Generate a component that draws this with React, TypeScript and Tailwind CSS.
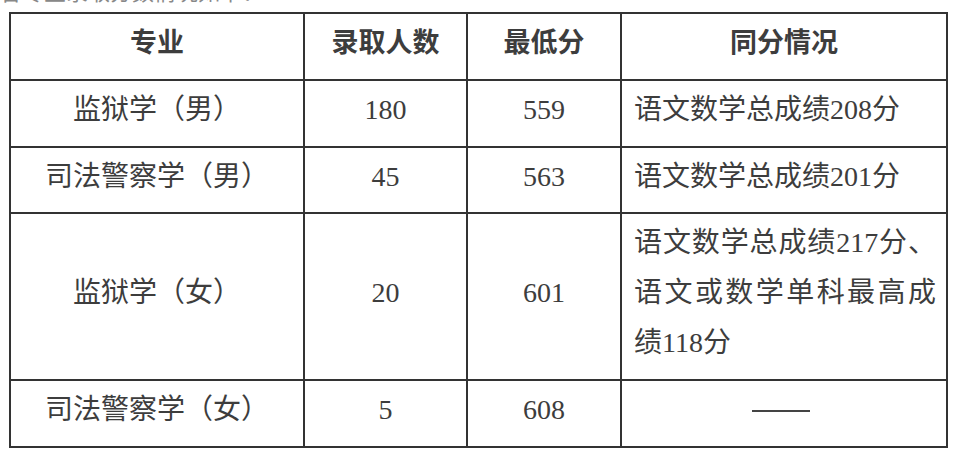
const body = '"Liberation Serif", "Noto Sans CJK SC", serif'
const head = '"Noto Sans CJK SC", "Noto Sans", sans-serif'

type Row = { major: string; count: string; min: string; tie: string[]; h: string }

const rows: Row[] = [
    { major: "监狱学（男）", count: "180", min: "559", tie: ["语文数学总成绩208分"], h: "h-[67px]" },
    { major: "司法警察学（男）", count: "45", min: "563", tie: ["语文数学总成绩201分"], h: "h-[66px]" },
    { major: "监狱学（女）", count: "20", min: "601", tie: ["语文数学总成绩217分、", "语文或数学单科最高成", "绩118分"], h: "h-[167px]" },
    { major: "司法警察学（女）", count: "5", min: "608", tie: [], h: "h-[67px]" },
]

export default function App() {
    return <div className="w-[960px] h-[459px] bg-white overflow-hidden">
        <div className="h-[6px] overflow-hidden">
            <div className="-mt-[23px] text-[22px] leading-[26px] text-[#888]" style={{ fontFamily: head }}>
                各专业录取分数情况如下：
            </div>
        </div>
        <div className="pt-[6px] pl-[9px]">
            <table className="table-fixed border-collapse w-[937px] text-[#3d3d3d]">
                <colgroup>
                    <col className="w-[294px]" />
                    <col className="w-[163px]" />
                    <col className="w-[154px]" />
                    <col className="w-[326px]" />
                </colgroup>
                <thead>
                    <tr className="h-[67px]">
                        {["专业", "录取人数", "最低分", "同分情况"].map(t =>
                            <th key={t} className="border-2 border-[#333] text-[27px] font-bold text-center p-0 pb-[10px]" style={{ fontFamily: head }}>{t}</th>
                        )}
                    </tr>
                </thead>
                <tbody>
                    {rows.map(r => <Cells key={r.major} row={r} />)}
                </tbody>
            </table>
        </div>
    </div>
}

function Cells({ row }: { row: Row }) {
    const cell = "border-2 border-[#333] text-[28px] p-0 pb-[7px] align-middle"
    return <tr className={row.h} style={{ fontFamily: body }}>
        <td className={cell + " text-center"}>{row.major}</td>
        <td className={cell + " text-center"}>{row.count}</td>
        <td className={cell + " text-center"}>{row.min}</td>
        <td className={cell + " pl-[12px] pr-[10px]"}>
            {row.tie.length === 0
                ? <div className="flex justify-center"><div className="w-[58px] h-[1.5px] bg-[#444] mr-[8px] mt-[2px]"></div></div>
                : row.tie.map((l, i) =>
                    <div key={i} className={"leading-[50px] " + (i < row.tie.length - 1 ? "text-justify [text-align-last:justify]" : "")}>{l}</div>
                )}
        </td>
    </tr>
}
